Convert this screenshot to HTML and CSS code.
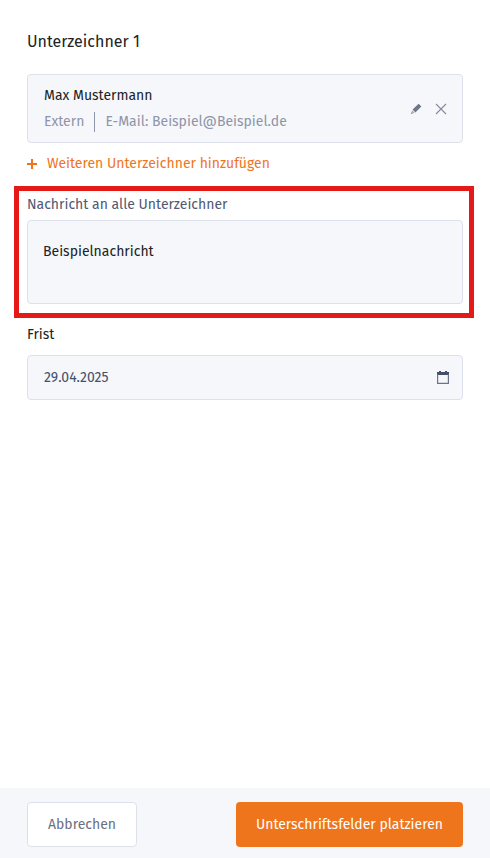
FILE: index.html
```html
<!DOCTYPE html>
<html lang="de">
<head>
    <meta charset="UTF-8">
    <meta name="viewport" content="width=device-width, initial-scale=1.0">
    <title>Unterzeichner</title>
    <link rel="stylesheet" href="styles.css">
</head>
<body>
    <form class="page">
        <main class="content">
            <section class="signers">
                <h1>Unterzeichner 1</h1>
                <div class="signer-card">
                    <div class="signer-info">
                        <div class="signer-name">Max Mustermann</div>
                        <div class="signer-meta">
                            <span>Extern</span>
                            <span class="signer-mail">E-Mail: Beispiel@Beispiel.de</span>
                        </div>
                    </div>
                    <div class="signer-actions">
                        <button type="button" class="icon-button" aria-label="Bearbeiten">
                            <svg width="12" height="12" viewBox="0 0 12 12">
                                <path d="M8.6 .8 11.4 3.6 5.4 9.4 2.6 6.6Z" fill="#6f7688"/>
                                <path d="M2.2 7.2 4.7 9.7 1 11Z" fill="#a9aebb"/>
                                <path d="M1 11 1.5 9.6 2.4 10.5Z" fill="#6f7688"/>
                            </svg>
                        </button>
                        <button type="button" class="icon-button" aria-label="Entfernen">
                            <svg width="12" height="12" viewBox="0 0 12 12">
                                <path d="M1 1 11 11M11 1 1 11" stroke="#858b9a" stroke-width="1.1" fill="none"/>
                            </svg>
                        </button>
                    </div>
                </div>
                <button type="button" class="add-button">
                    <svg width="10" height="10" viewBox="0 0 10 10">
                        <path d="M0 5H10M5 0V10" stroke="#ee751c" stroke-width="2"/>
                    </svg>
                    Weiteren Unterzeichner hinzufügen
                </button>
            </section>

            <section class="message">
                <label for="message">Nachricht an alle Unterzeichner</label>
                <textarea id="message">Beispielnachricht</textarea>
            </section>

            <section class="deadline">
                <label for="deadline">Frist</label>
                <div class="date-field">
                    <input type="text" id="deadline" value="29.04.2025">
                    <button type="button" class="icon-button" aria-label="Kalender öffnen">
                        <svg width="12" height="13" viewBox="0 0 12 13">
                            <path d="M2 0H4V1H8V0H10V1H12V4H0V1H2Z" fill="#475069"/>
                            <path d="M.6 3V12.3H11.4V3" fill="none" stroke="#6d748a" stroke-width="1.2"/>
                        </svg>
                    </button>
                </div>
            </section>
        </main>

        <footer class="footer">
            <button type="button" class="btn btn-cancel">Abbrechen</button>
            <button type="submit" class="btn btn-primary">Unterschriftsfelder platzieren</button>
        </footer>
    </form>
</body>
</html>
```
FILE: styles.css
```css
* {
    box-sizing: border-box;
}
body {
    margin: 0;
    font-family: "Fira Sans", "Noto Sans", sans-serif;
    font-size: 14px;
    line-height: 20px;
    color: #222;
    background: #fff;
}
button, input, textarea {
    font: inherit;
    color: inherit;
}
button {
    cursor: pointer;
}
svg {
    display: block;
}
.page {
    display: flex;
    flex-direction: column;
    min-height: 100vh;
}
.content {
    flex: 1;
}
.signers {
    padding: 30px 27px 12px;
}
h1 {
    margin: 0 0 20px;
    font-size: 16px;
    line-height: 24px;
    font-weight: 400;
}
.signer-card {
    display: flex;
    align-items: center;
    justify-content: space-between;
    padding: 11px 15px 10px 16px;
    background: #f5f7fb;
    border: 1px solid #dde1ec;
    border-radius: 4px;
}
.signer-info {
    display: flex;
    flex-direction: column;
    gap: 6px;
}
.signer-meta {
    display: flex;
    gap: 10px;
    color: #8f94a8;
}
.signer-mail {
    padding-left: 10px;
    border-left: 1px solid #8f94a8;
}
.signer-actions {
    display: flex;
    gap: 13px;
}
.icon-button {
    padding: 0;
    background: none;
    border: none;
}
.add-button {
    display: flex;
    align-items: center;
    gap: 10px;
    margin-top: 11px;
    padding: 0;
    background: none;
    border: none;
    color: #ee751c;
}
.message {
    margin: 0 16px 0 14px;
    padding: 4px 6px 9px 8px;
    border: 5px solid #e61919;
}
.message label {
    display: block;
    margin-bottom: 5px;
    color: #505872;
}
.message textarea {
    display: block;
    width: 100%;
    height: 84px;
    padding: 21px 15px;
    background: #f5f7fb;
    border: 1px solid #dde1ec;
    border-radius: 4px;
    resize: none;
}
.deadline {
    padding: 7px 27px;
}
.deadline label {
    display: block;
    margin-bottom: 10px;
}
.date-field {
    display: flex;
    align-items: center;
    padding: 0 13px 0 16px;
    background: #f5f7fb;
    border: 1px solid #dde1ec;
    border-radius: 4px;
}
.date-field input {
    flex: 1;
    min-width: 0;
    height: 43px;
    padding: 0;
    background: none;
    border: none;
    color: #475069;
}
.footer {
    display: flex;
    justify-content: space-between;
    padding: 14px 27px 11px;
    background: #f5f7fb;
}
.btn {
    height: 45px;
    padding: 0 20px;
    border: 1px solid #dde1ec;
    border-radius: 4px;
}
.btn-cancel {
    background: #fff;
    color: #6a7080;
}
.btn-primary {
    background: #ee751c;
    border: none;
    color: #fff;
}
```
